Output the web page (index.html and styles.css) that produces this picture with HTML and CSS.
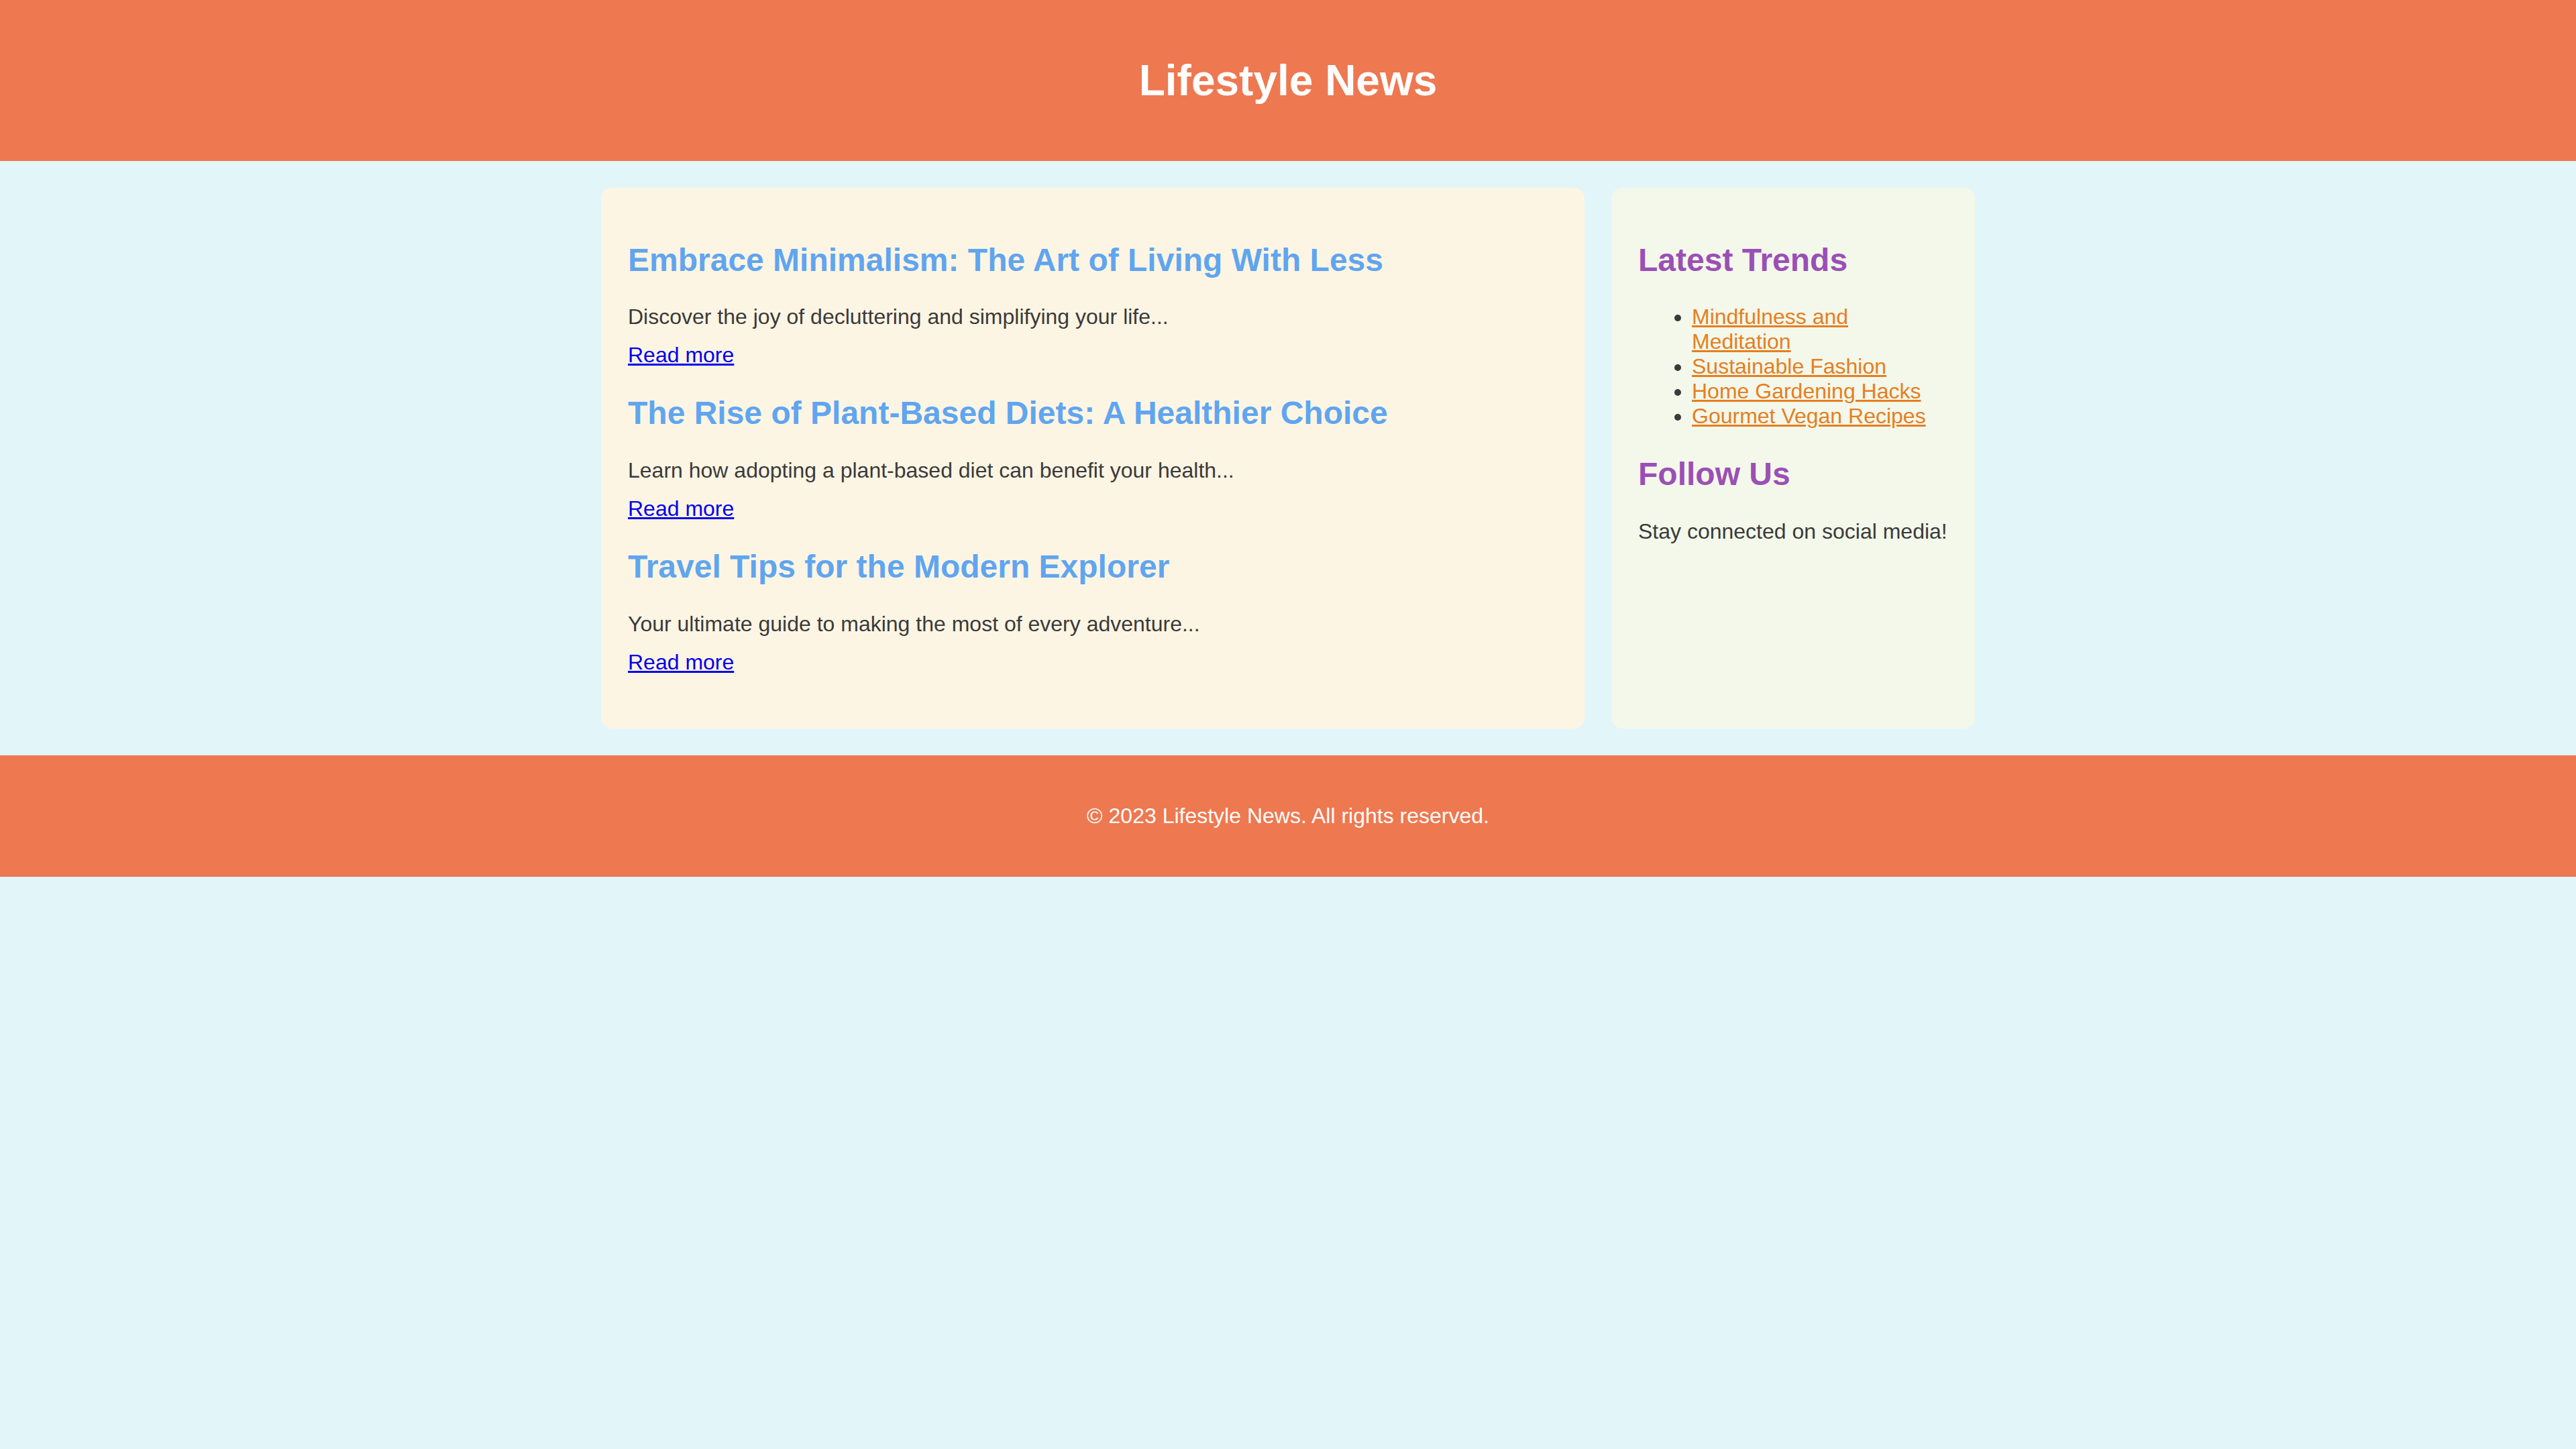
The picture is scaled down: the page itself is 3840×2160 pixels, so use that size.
FILE: index.html
```html
<!DOCTYPE html>
<html lang="en">
<head>
<meta charset="utf-8">
<title>Lifestyle News</title>
<link rel="stylesheet" href="styles.css">
</head>
<body>
<header class="site-header">
  <h1 class="site-title">Lifestyle News</h1>
</header>
<div class="container">
  <main class="main-col">
    <article class="post">
      <h2 class="post-title">Embrace Minimalism: The Art of Living With Less</h2>
      <p class="post-excerpt">Discover the joy of decluttering and simplifying your life...</p>
      <a class="read-more" href="#">Read more</a>
    </article>
    <article class="post">
      <h2 class="post-title">The Rise of Plant-Based Diets: A Healthier Choice</h2>
      <p class="post-excerpt">Learn how adopting a plant-based diet can benefit your health...</p>
      <a class="read-more" href="#">Read more</a>
    </article>
    <article class="post">
      <h2 class="post-title">Travel Tips for the Modern Explorer</h2>
      <p class="post-excerpt">Your ultimate guide to making the most of every adventure...</p>
      <a class="read-more" href="#">Read more</a>
    </article>
  </main>
  <aside class="sidebar">
    <h2 class="side-title">Latest Trends</h2>
    <ul class="trend-list">
      <li><a class="trend-link" href="#">Mindfulness and Meditation</a></li>
      <li><a class="trend-link" href="#">Sustainable Fashion</a></li>
      <li><a class="trend-link" href="#">Home Gardening Hacks</a></li>
      <li><a class="trend-link" href="#">Gourmet Vegan Recipes</a></li>
    </ul>
    <h2 class="side-title">Follow Us</h2>
    <p class="side-text">Stay connected on social media!</p>
  </aside>
</div>
<footer class="site-footer">
  <p class="footer-text">&copy; 2023 Lifestyle News. All rights reserved.</p>
</footer>
</body>
</html>
```

FILE: styles.css
```css
html, body {
  margin: 0;
  padding: 0;
}

body {
  font-family: "Liberation Sans", Arial, sans-serif;
  font-size: 32px;
  background: #e2f5f9;
  color: #3a3a3a;
}

.site-header {
  background: #ee7850;
  color: #ffffff;
  padding: 40px;
  text-align: center;
}

.site-title {
  font-size: 64px;
  font-weight: bold;
  margin: 42.88px 0;
}

.container {
  display: flex;
  gap: 40px;
  max-width: 2048px;
  margin: 40px auto;
}

.main-col {
  flex: 3;
  background: #fdf5e3;
  padding: 40px;
  border-radius: 16px;
}

.sidebar {
  flex: 1;
  background: #f3f8ea;
  padding: 40px;
  border-radius: 16px;
}

.post {
  margin-bottom: 40px;
}

.post-title {
  font-size: 48px;
  font-weight: bold;
  color: #60a5ef;
  margin: 39.84px 0;
}

.post-excerpt {
  margin: 32px 0 20px;
}

.read-more {
  color: #0000ee;
}

.side-title {
  font-size: 48px;
  font-weight: bold;
  color: #9b4fb6;
  margin: 39.84px 0;
}

.trend-list {
  margin: 32px 0;
  padding-left: 80px;
}

.trend-link {
  color: #e67e22;
}

.side-text {
  margin: 32px 0;
}

.site-footer {
  background: #ee7850;
  color: #ffffff;
  padding: 40px;
  text-align: center;
}

.footer-text {
  margin: 32px 0;
}
```
